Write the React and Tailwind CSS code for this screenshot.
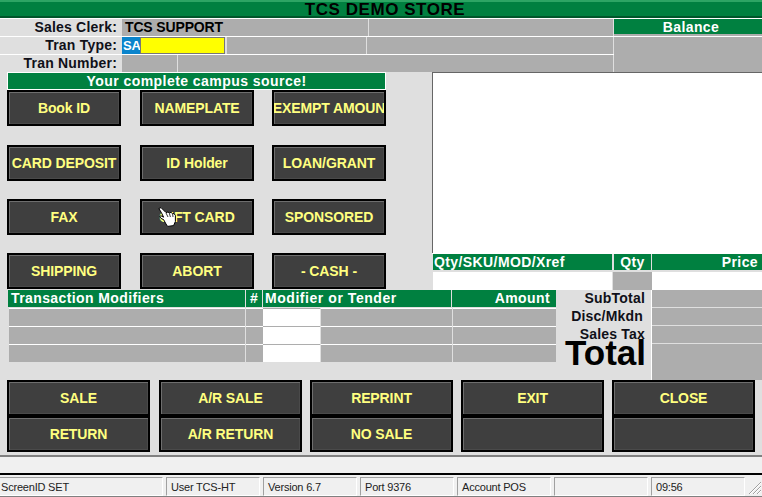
import React from 'react';

const FONT = "font-['Liberation_Sans',Arial,sans-serif]";

const OPTION_ROWS = [
  ['Book ID', 'NAMEPLATE', 'EXEMPT AMOUN'],
  ['CARD DEPOSIT', 'ID Holder', 'LOAN/GRANT'],
  ['FAX', 'GIFT CARD', 'SPONSORED'],
  ['SHIPPING', 'ABORT', '- CASH -'],
];

const ACTION_ROWS = [
  ['SALE', 'A/R SALE', 'REPRINT', 'EXIT', 'CLOSE'],
  ['RETURN', 'A/R RETURN', 'NO SALE', '', ''],
];

const STATUS_PANELS = ['ScreenID SET', 'User TCS-HT', 'Version 6.7', 'Port 9376', 'Account POS', '', '09:56'];

function PosButton({ label, className = '', children }) {
  return (
    <div className={`relative flex items-center justify-center overflow-hidden whitespace-nowrap border-2 border-black bg-[#3f3f3f] text-[14px] font-bold tracking-[-0.1px] text-[#ffff80] shadow-[inset_1px_1px_0_#6e6e6e,inset_-1px_-1px_0_#4a4a4a] ${className}`}>
      {label}
      {children}
    </div>
  );
}

function HandCursor() {
  return (
    <svg className="absolute left-[16px] top-[6px]" width="18" height="20" viewBox="0 0 18 20">
      <path
        d="M0.8 1.6 L3 0.6 L8 5.6 L10 5 L11.4 6 L13 5.4 L14.6 6.6 L16 6.6 L17.4 8.4 L17.4 14.5 L15.6 18.6 L9.6 19.4 L8 17 L5.6 12.6 L3 11.4 L1.6 9.4 L3 8.8 L5.6 10.2 L3.4 5.6 Z"
        fill="#fff"
        stroke="#000"
        strokeWidth="1"
        strokeLinejoin="round"
      />
      <path d="M8 6 L10 10 M11.4 6.4 L12.4 10 M14.6 7 L15 10" stroke="#000" strokeWidth="0.8" fill="none" />
    </svg>
  );
}

function SizeGrip() {
  return (
    <svg className="absolute bottom-[1px] right-0" width="14" height="14" viewBox="0 0 14 14">
      <path d="M1 13 L13 1 M5 13 L13 5 M9 13 L13 9" stroke="#a0a0a0" strokeWidth="1" fill="none" />
      <path d="M2 13 L13 2 M6 13 L13 6 M10 13 L13 10" stroke="#fff" strokeWidth="1" fill="none" />
    </svg>
  );
}

function GreenHead({ children, className = '' }) {
  return (
    <div className={`flex h-[16px] items-center whitespace-nowrap bg-[#008040] text-[14px] font-bold leading-none tracking-[0.4px] text-white ${className}`}>
      {children}
    </div>
  );
}

function ModifierRow() {
  return (
    <div className="flex h-[18px] pl-[1px]">
      <div className="w-[236px] border-t border-white bg-[#adadad]" />
      <div className="ml-px w-[17px] border-t border-white bg-[#adadad]" />
      <div className="w-[57px] border-t border-[#adadad] bg-white" />
      <div className="ml-px w-[131px] border-t border-white bg-[#adadad]" />
      <div className="ml-px w-[103px] border-t border-white bg-[#adadad]" />
    </div>
  );
}

export default function App() {
  return (
    <div className={`${FONT} flex h-[497px] w-[762px] flex-col overflow-hidden bg-[#dfdfdf] text-black`}>
      {/* title bar */}
      <div className="flex h-[18px] items-center justify-center border-t-2 border-b-2 border-t-[#2da564] border-b-[#00562b] bg-[#008040] pl-[8px] text-[17px] font-bold leading-none tracking-[0.55px]">
        TCS DEMO STORE
      </div>

      {/* header fields */}
      <div className="flex h-[54px]">
        <div className="flex w-[614px] flex-col">
          <div className="flex h-[18px] border-t border-white">
            <div className="w-[122px] pr-[5px] text-right text-[14px] font-bold leading-[17px] tracking-[0.2px] text-[#101018]">Sales Clerk:</div>
            <div className="w-[246px] bg-[#adadad] pl-[3px] text-[14px] font-bold leading-[17px] tracking-[-0.15px]">TCS SUPPORT</div>
            <div className="ml-px w-[244px] bg-[#adadad]" />
          </div>
          <div className="flex h-[18px] border-t border-white">
            <div className="w-[122px] pr-[5px] text-right text-[14px] font-bold leading-[17px] tracking-[0.2px] text-[#101018]">Tran Type:</div>
            <div className="w-[18px] bg-[#0a84cc] pl-[1px] text-[13px] font-bold leading-[17px] tracking-[-0.2px] text-white">SA</div>
            <div className="w-[85px] border border-[#777] bg-[#ffff00]" />
            <div className="ml-[2px] w-[139px] bg-[#adadad]" />
            <div className="ml-px w-[246px] bg-[#adadad]" />
          </div>
          <div className="flex h-[18px] border-t border-white">
            <div className="w-[122px] pr-[5px] text-right text-[14px] font-bold leading-[17px] tracking-[0.2px] text-[#101018]">Tran Number:</div>
            <div className="w-[55px] bg-[#adadad]" />
            <div className="ml-px w-[435px] bg-[#adadad]" />
          </div>
        </div>
        <div className="flex w-[148px] flex-col border-t border-white">
          <div className="h-[17px] border-b-2 border-[#adadad] bg-[#008040] pl-[6px] text-center text-[14px] font-bold leading-[16px] tracking-[0.4px] text-white">Balance</div>
          <div className="h-px bg-white" />
          <div className="flex-1 bg-[#adadad]" />
        </div>
      </div>

      {/* option buttons and item entry */}
      <div className="flex h-[218px]">
        <div className="w-[432px] pl-[7px]">
          <div className="w-[379px] border border-white">
            <GreenHead className="justify-center tracking-[0.45px]">Your complete campus source!</GreenHead>
          </div>
          <div className="grid grid-cols-[133px_132px_114px] grid-rows-[55px_54px_54px_36px]">
            {OPTION_ROWS.flat().map((label) => (
              <PosButton key={label} label={label} className="h-[36px] w-[114px]">
                {label === 'GIFT CARD' && <HandCursor />}
              </PosButton>
            ))}
          </div>
        </div>
        <div className="flex w-[330px] flex-col">
          <div className="h-[181px] border-l border-t border-[#666] bg-white" />
          <div className="flex h-[19px] gap-px border-t border-white pl-px">
            <GreenHead className="w-[179px] pl-[1px] tracking-[0.3px]">Qty/SKU/MOD/Xref</GreenHead>
            <GreenHead className="ml-px w-[37px] justify-center">Qty</GreenHead>
            <GreenHead className="w-[110px] justify-end pr-[4px]">Price</GreenHead>
          </div>
          <div className="flex h-[18px] pl-px">
            <div className="w-[179px] bg-white" />
            <div className="ml-px w-[39px] bg-[#adadad]" />
            <div className="flex-1 bg-white" />
          </div>
        </div>
      </div>

      {/* modifiers and totals */}
      <div className="flex h-[90px]">
        <div className="w-[556px] pl-[8px]">
          <div className="flex h-[18px] gap-px">
            <GreenHead className="h-[17px] w-[237px] pb-px pl-[3px] tracking-[0.3px]">Transaction Modifiers</GreenHead>
            <GreenHead className="h-[17px] w-[16px] justify-center pb-px">#</GreenHead>
            <GreenHead className="h-[17px] w-[188px] pb-px pl-[2px] tracking-[0.55px]">Modifier or Tender</GreenHead>
            <GreenHead className="h-[17px] w-[104px] justify-end pb-px pr-[6px]">Amount</GreenHead>
          </div>
          <ModifierRow />
          <ModifierRow />
          <ModifierRow />
        </div>
        <div className="-mt-px w-[90px] text-right text-[14px] font-bold leading-[18px] tracking-[0.2px] text-[#101018]">
          <div className="h-[18px] pr-px">SubTotal</div>
          <div className="h-[18px] pr-[3px]">Disc/Mkdn</div>
          <div className="h-[18px] pr-px">Sales Tax</div>
          <div className="-mt-[5px] whitespace-nowrap text-[35px] leading-[30px] tracking-normal text-black">Total</div>
        </div>
        <div className="ml-[5px] flex flex-1 flex-col gap-px border-l border-white">
          <div className="h-[17px] bg-[#adadad]" />
          <div className="h-[17px] bg-[#adadad]" />
          <div className="h-[17px] bg-[#adadad]" />
          <div className="flex-1 bg-[#adadad]" />
        </div>
      </div>

      {/* action buttons */}
      <div className="grid grid-cols-[152px_151px_151px_151px_143px] pl-[7px]">
        {ACTION_ROWS.flat().map((label, i) => (
          <PosButton key={i} label={label} className="h-[36px] w-[143px]" />
        ))}
      </div>

      {/* status bar */}
      <div className="mt-[3px] h-[18px] border-t-2 border-[#808080] bg-[#f0f0f0]" />
      <div className="h-[2px] bg-black" />
      <div className="relative flex flex-1 items-start gap-[3px] border-b border-[#808080] bg-[#f0f0f0] pt-[2px]">
        {STATUS_PANELS.map((text, i) => (
          <div
            key={i}
            className={`${i === 0 ? 'w-[163px] border-l-0 pl-px' : 'w-[94px] pl-[4px]'} h-[19px] border border-b-white border-l-[#a0a0a0] border-r-white border-t-[#a0a0a0] text-[11px] leading-[18px] tracking-[-0.2px] text-[#222]`}
          >
            {text}
          </div>
        ))}
        <SizeGrip />
      </div>
    </div>
  );
}
